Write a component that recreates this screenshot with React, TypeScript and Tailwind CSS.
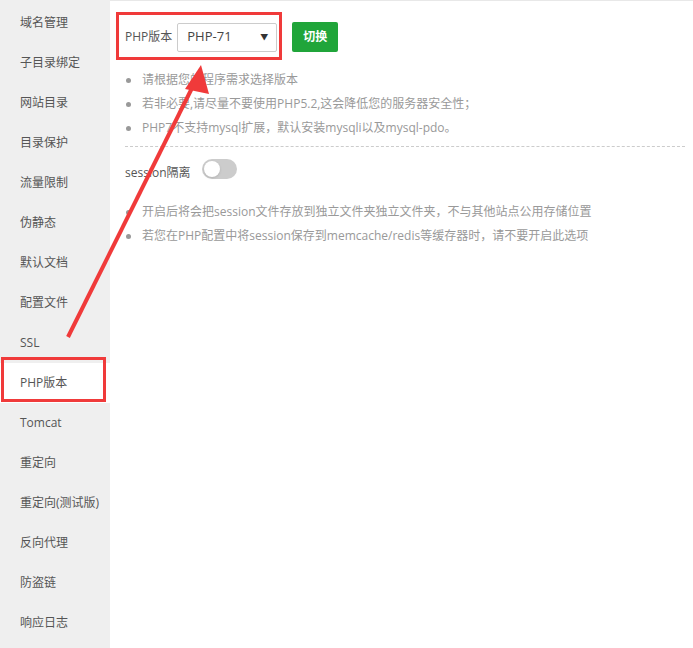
import { useState } from "react";

const MENU = [
  "域名管理",
  "子目录绑定",
  "网站目录",
  "目录保护",
  "流量限制",
  "伪静态",
  "默认文档",
  "配置文件",
  "SSL",
  "PHP版本",
  "Tomcat",
  "重定向",
  "重定向(测试版)",
  "反向代理",
  "防盗链",
  "响应日志",
];

const PHP_TIPS = [
  "请根据您的程序需求选择版本",
  "若非必要,请尽量不要使用PHP5.2,这会降低您的服务器安全性；",
  "PHP7不支持mysql扩展，默认安装mysqli以及mysql-pdo。",
];

const SESSION_TIPS = [
  "开启后将会把session文件存放到独立文件夹独立文件夹，不与其他站点公用存储位置",
  "若您在PHP配置中将session保存到memcache/redis等缓存器时，请不要开启此选项",
];

function Tips({ items }: { items: string[] }) {
  return (
    <ul className="flex flex-col">
      {items.map((t) => (
        <li key={t} className="flex items-center h-6 text-[12px] text-[#999]">
          <span className="w-[5px] h-[5px] rounded-full bg-[#999] ml-[1px] mr-[11px]" />
          {t}
        </li>
      ))}
    </ul>
  );
}

export default function App() {
  const [active] = useState("PHP版本");
  const [on, setOn] = useState(false);

  return (
    <div
      className="relative flex w-[693px] h-[648px] bg-white overflow-hidden"
      style={{ fontFamily: '"Open Sans", "Noto Sans CJK SC", sans-serif' }}
    >
      {/* sidebar */}
      <div className="w-[110px] shrink-0 bg-[#efefef] pt-[3px]">
        {MENU.map((m) => (
          <div
            key={m}
            className={
              "h-10 flex items-center pl-5 text-[12px] text-[#555] " +
              (m === active ? "bg-white" : "")
            }
          >
            {m}
          </div>
        ))}
      </div>

      {/* content */}
      <div className="flex-1 border-t border-[#e8e8e8] pl-[15px] pr-2 pt-[21px]">
        <div className="flex items-center">
          <span className="text-[12px] text-[#555] mr-[5px]">PHP版本</span>
          <div className="w-[100px] h-[29px] border border-[#ccc] rounded-[2px] flex items-center justify-between pl-[9px] pr-[8px]">
            <span className="text-[13px] text-[#444]">PHP-71</span>
            <span className="text-[8px] text-[#333]">▼</span>
          </div>
          <button className="ml-[15px] w-[46px] h-[30px] rounded-[2px] bg-[#20a53a] text-white text-[12px] font-bold">
            切换
          </button>
        </div>

        <div className="mt-[16px]">
          <Tips items={PHP_TIPS} />
        </div>

        <div className="mt-[6px] border-t border-dashed border-[#ccc] w-[560px]" />

        <div className="flex items-start mt-[12px]">
          <span className="text-[12px] text-[#555] mt-[5px]">session隔离</span>
          <button
            onClick={() => setOn(!on)}
            className={
              "ml-[11px] w-[35px] h-[20px] rounded-full p-[2px] flex " +
              (on ? "bg-[#20a53a] justify-end" : "bg-[#ccc] justify-start")
            }
          >
            <span className="w-4 h-4 rounded-full bg-white shadow" />
          </button>
        </div>

        <div className="mt-[18px]">
          <Tips items={SESSION_TIPS} />
        </div>
      </div>

      {/* annotations */}
      <div className="absolute left-[1px] top-[357px] w-[105px] h-[45px] border-[3px] border-[#f03a3a]" />
      <div className="absolute left-[116px] top-[12px] w-[166px] h-[48px] border-[3px] border-[#f03a3a]" />
      <svg className="absolute left-0 top-0 pointer-events-none" width="693" height="648">
        <line x1="68" y1="337" x2="196" y2="80" stroke="#f03a3a" strokeWidth="4" />
        <polygon points="201,65 185,89 209,94" fill="#f03a3a" />
      </svg>
    </div>
  );
}
